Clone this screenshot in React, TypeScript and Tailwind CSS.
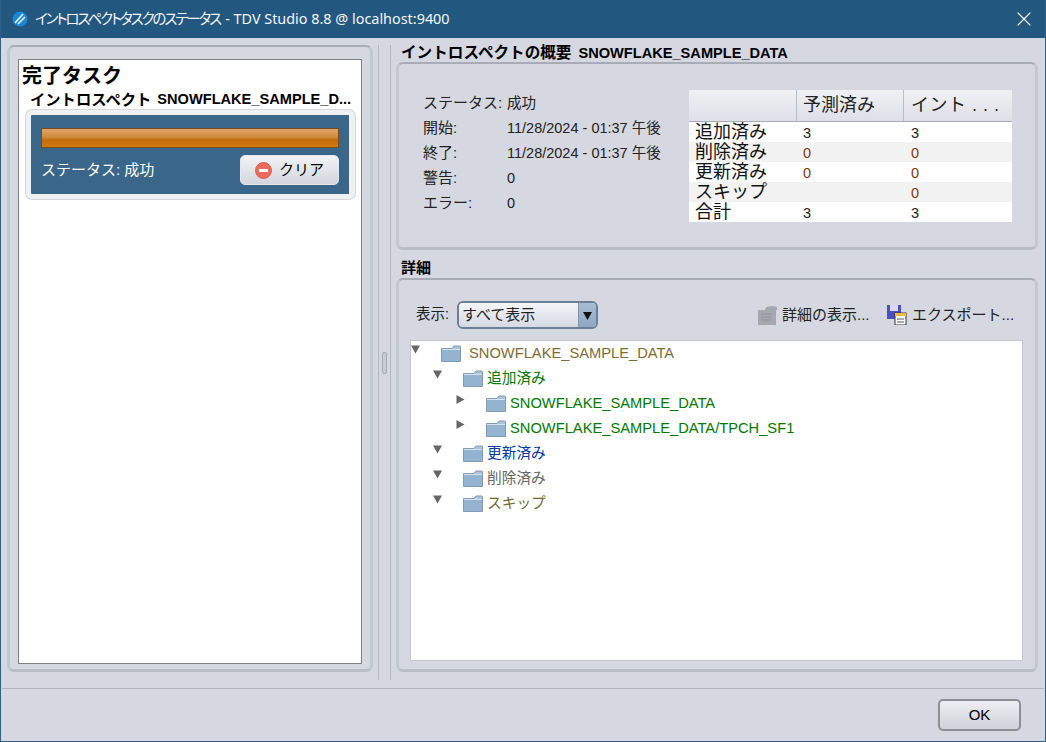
import React from "react";
import { X } from "lucide-react";

const jp = "font-['Liberation_Sans','Noto_Sans_CJK_JP',sans-serif]";

function Folder() {
  return (
    <svg width="20" height="17" viewBox="0 0 20 17" className="shrink-0">
      <path d="M0.5 3.5H11L13 1H18.5Q19.5 1 19.5 2V16.5H0.5Z" fill="#acc3d9" stroke="#7f9bb6" />
      <rect x="1" y="5" width="18" height="11" fill="#94b3d0" />
      <rect x="1" y="4" width="18" height="1" fill="#d8e3ee" />
    </svg>
  );
}

function Arrow({ open }: { open: boolean }) {
  return open ? (
    <svg width="9" height="9" viewBox="0 0 9 9" className="shrink-0">
      <path d="M0 0.5H9L4.5 8.5Z" fill="#666" />
    </svg>
  ) : (
    <svg width="9" height="9" viewBox="0 0 9 9" className="shrink-0">
      <path d="M0.5 0L8.5 4.5L0.5 9Z" fill="#666" />
    </svg>
  );
}

function TreeRow({ indent, open, label, color, gap }: { indent: string; open: boolean; label: string; color: string; gap: string }) {
  return (
    <div className={`flex h-[25px] items-center ${indent}`}>
      <div className="w-[30px] -mt-2">
        <Arrow open={open} />
      </div>
      <Folder />
      <span className={`text-[14.7px] ${gap} ${color}`}>{label}</span>
    </div>
  );
}

const stats = [
  ["ステータス:", "成功"],
  ["開始:", "11/28/2024 - 01:37 午後"],
  ["終了:", "11/28/2024 - 01:37 午後"],
  ["警告:", "0"],
  ["エラー:", "0"],
];

const rows = [
  ["追加済み", "3", "3"],
  ["削除済み", "0", "0"],
  ["更新済み", "0", "0"],
  ["スキップ", "", "0"],
  ["合計", "3", "3"],
];

export default function App() {
  return (
    <div className={`flex h-[742px] w-[1046px] flex-col overflow-hidden border-x border-b border-[#2c6088] bg-[#d5d8e0] text-black ${jp}`}>
      <div className="-mx-[1px] flex h-[38px] shrink-0 items-center bg-[#22577f] pl-[12px] pr-[10px]">
        <svg width="16" height="16" viewBox="0 0 16 16" className="shrink-0">
          <circle cx="8" cy="8" r="7.5" fill="#1b87d6" />
          <path d="M3 12L11 3M6 13L13 6" stroke="#e6f3fb" strokeWidth="1.6" />
        </svg>
        <span className="ml-[7px] flex-1 font-['Noto_Sans','Noto_Sans_CJK_JP',sans-serif] text-[14.4px] text-[#f2f6fa] [font-feature-settings:'palt']">
          <span className="tracking-[-2px]">イントロスペクトタスクのステータス</span>
          <span className="ml-[5px]">- TDV Studio 8.8 @ localhost:9400</span>
        </span>
        <X size={24} strokeWidth={1.1} className="text-white" />
      </div>

      <div className="flex min-h-0 flex-1 pl-[6px] pr-[7px] pt-[7px]">
        {/* left */}
        <div className="h-[627px] w-[366px] shrink-0 rounded-[7px] border-x-[3px] border-b-[3px] border-t-2 border-x-[#c3c7d0] border-b-[#b9bdc6] border-t-[#a8acb6] px-[8px] pt-[12px]">
          <div className="h-[605px] border border-[#808080] bg-white pl-[3px]">
            <div className="mt-[4px] text-[20px] font-bold leading-[25px]">完了タスク</div>
            <div className="ml-[8px] flex h-[21px] items-center font-bold leading-[21px]">
              <span className="text-[15.3px]">イントロスペクト</span>
              <span className="ml-[6px] text-[14.6px]">SNOWFLAKE_SAMPLE_D...</span>
            </div>
            <div className="ml-[4px] box-border h-[89px] w-[329px] rounded-[6px] border-y-[5px] border-l-[5px] border-r-[6px] border-[#eef0f2] bg-[#3a6789] px-[10px] pt-[13px] shadow-[0_0_0_1px_#d4d7dd]">
              <div className="h-[20px] border border-[#7a4a18] bg-[linear-gradient(#dca56c,#cf8a3c_45%,#c46c08_60%,#d07a12)]" />
              <div className="mt-[7px] flex items-center justify-between">
                <span className="text-[15px] text-white">ステータス: 成功</span>
                <div className="flex h-[30px] w-[99px] items-center justify-center gap-[7px] rounded-[5px] border border-[#e6e8ec] bg-[linear-gradient(#f2f3f6,#d3d6de)] text-[15px]">
                  <span className="flex h-[17px] w-[17px] items-center justify-center rounded-full border border-[#d8604f] bg-[#ea6a5c]">
                    <span className="h-[3px] w-[9px] bg-white" />
                  </span>
                  クリア
                </div>
              </div>
            </div>
          </div>
        </div>

        {/* splitter */}
        <div className="mx-[5px] flex h-[635px] w-[13px] shrink-0 items-center justify-center border-x border-[#b4b8c2]">
          <div className="h-[22px] w-[5px] rounded-[2px] border border-[#a8acb6] bg-[#c8ccd4]" />
        </div>

        {/* right */}
        <div className="flex min-w-0 flex-1 flex-col">
          <div className="ml-[5px] -mt-[1px] flex h-[18px] items-center font-bold leading-[18px]">
            <span className="text-[15.6px]">イントロスペクトの概要</span>
            <span className="ml-[7px] text-[14.6px]">SNOWFLAKE_SAMPLE_DATA</span>
          </div>
          <div className="flex h-[188px] shrink-0 rounded-[7px] border-x-[3px] border-b-[3px] border-t-2 border-x-[#c3c7d0] border-b-[#b9bdc6] border-t-[#a8acb6] pl-[24px] pt-[26px]">
            <div className="w-[266px] pt-[1px]">
              {stats.map((s) => (
                <div key={s[0]} className="flex h-[25px] items-center text-[14.5px] text-[#222]">
                  <span className="w-[84px] text-[15px]">{s[0]}</span>
                  <span>{s[1]}</span>
                </div>
              ))}
            </div>
            <div className="w-[323px]">
              <div className="grid h-[32px] grid-cols-[108px_107px_108px] border-b border-[#a8acb6] bg-[linear-gradient(#f0f1f4,#dde0e6)] text-[18px] text-[#222]">
                <div className="border-r border-[#b8bcc6]" />
                <div className="border-r border-[#b8bcc6] pl-[6px] leading-[30px]">予測済み</div>
                <div className="pl-[7px] leading-[30px] tracking-[0.5px]">イント . . .</div>
              </div>
              {rows.map((r, i) => (
                <div key={r[0]} className={`grid h-[20px] grid-cols-[108px_107px_108px] items-start ${i % 2 ? "bg-[#f2f2f2]" : "bg-white"}`}>
                  <span className="pl-[6px] text-[18px] leading-[21px] text-[#111]">{r[0]}</span>
                  <span className={`pl-[6px] text-[14.5px] leading-[22px] ${r[1] === "0" ? "text-[#7a3a14]" : "text-[#222]"}`}>{r[1]}</span>
                  <span className={`pl-[7px] text-[14.5px] leading-[22px] ${r[2] === "0" ? "text-[#7a3a14]" : "text-[#222]"}`}>{r[2]}</span>
                </div>
              ))}
            </div>
          </div>

          <div className="ml-[5px] mt-[8px] text-[15px] font-bold leading-[20px]">詳細</div>
          <div className="flex h-[394px] shrink-0 flex-col rounded-[7px] border-x-[3px] border-b-[3px] border-t-2 border-x-[#c3c7d0] border-b-[#b9bdc6] border-t-[#a8acb6] pl-[11px] pr-[12px] pt-[21px]">
            <div className="flex h-[28px] items-center text-[15px] text-[#222]">
              <span className="ml-[6px] w-[33px] whitespace-nowrap text-[14.5px]">表示:</span>
              <div className="ml-[8px] flex h-[28px] w-[141px] items-stretch overflow-hidden rounded-[6px] border-2 border-[#6b7f96]">
                <div className="flex-1 bg-[linear-gradient(#f4f5f8,#d6d9e2)] pl-[3px] text-[15px] leading-[24px]">すべて表示</div>
                <div className="flex w-[18px] items-center justify-center border-l border-[#7d93ab] bg-[linear-gradient(#a8bdd4,#8fa8c2)]">
                  <svg width="9" height="9" viewBox="0 0 9 9"><path d="M0 1H9L4.5 9Z" fill="#111" /></svg>
                </div>
              </div>
              <div className="ml-auto flex items-center pr-[10px]">
                <svg width="20" height="20" viewBox="0 0 20 20">
                  <path d="M1 5L8 5L9 2L15 1L20 2V5H19V20H1Z" fill="#a5a8ae" />
                  <path d="M4 9H14M4 12H14M4 15H14" stroke="#8e9198" />
                </svg>
                <span className="ml-[5px] w-[86px] whitespace-nowrap">詳細の表示...</span>
                <svg width="20" height="20" viewBox="0 0 20 20" className="ml-[19px]">
                  <rect x="0" y="0" width="14" height="14" fill="#4c4fc0" />
                  <rect x="3" y="0" width="8" height="6" fill="#d8d9f0" />
                  <rect x="8" y="8" width="11" height="12" fill="#fff" stroke="#333" />
                  <rect x="8" y="8" width="11" height="3" fill="#e9b94a" />
                  <path d="M10 14H17M10 17H17" stroke="#555" />
                </svg>
                <span className="ml-[5px] w-[101px] whitespace-nowrap">エクスポート...</span>
              </div>
            </div>
            <div className="mt-[11px] h-[321px] border border-[#c4c6cc] bg-white">
              <TreeRow indent="pl-[0px]" open label="SNOWFLAKE_SAMPLE_DATA" color="text-[#806a36]" gap="ml-[8px]" />
              <TreeRow indent="pl-[22px]" open label="追加済み" color="text-[#007a00]" gap="ml-[4px]" />
              <TreeRow indent="pl-[45px]" open={false} label="SNOWFLAKE_SAMPLE_DATA" color="text-[#007a00]" gap="ml-[4px]" />
              <TreeRow indent="pl-[45px]" open={false} label="SNOWFLAKE_SAMPLE_DATA/TPCH_SF1" color="text-[#007a00]" gap="ml-[4px]" />
              <TreeRow indent="pl-[22px]" open label="更新済み" color="text-[#003a9e]" gap="ml-[4px]" />
              <TreeRow indent="pl-[22px]" open label="削除済み" color="text-[#666]" gap="ml-[4px]" />
              <TreeRow indent="pl-[22px]" open label="スキップ" color="text-[#6e6a30]" gap="ml-[4px]" />
            </div>
          </div>
        </div>
      </div>

      <div className="mx-[1px] flex h-[53px] shrink-0 items-start justify-end border-t border-[#b0b3bc] pr-[23px] pt-[10px]">
        <div className="flex h-[32px] w-[83px] items-center justify-center rounded-[5px] border-2 border-[#8c8f96] bg-[linear-gradient(#eceef1,#cfd2d9)] text-[15px]">OK</div>
      </div>
    </div>
  );
}
